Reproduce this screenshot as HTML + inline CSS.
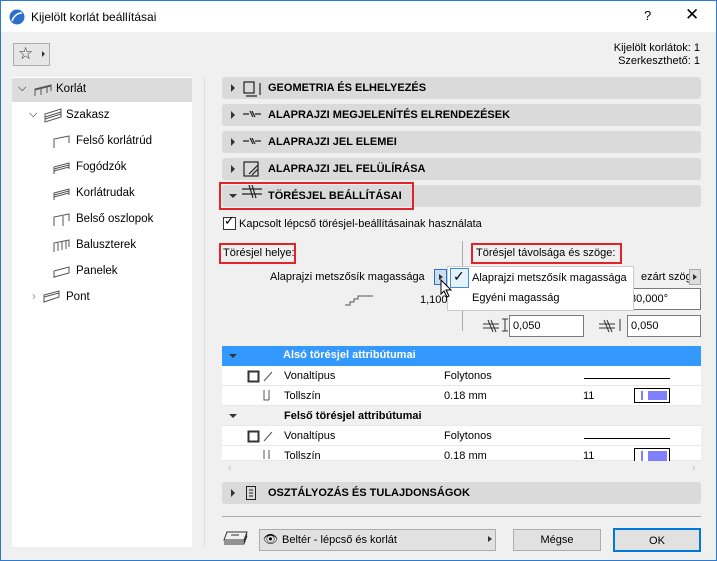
<!DOCTYPE html>
<html><head><meta charset="utf-8"><style>
*{box-sizing:border-box;margin:0;padding:0}
body{width:717px;height:561px;overflow:hidden;font-family:"Liberation Sans",sans-serif;font-size:11px;color:#000;background:#f0f0f0;position:relative}
.win{position:absolute;left:0;top:0;width:717px;height:561px;border:1px solid #2b7bd0;background:#f0f0f0}
.abs{position:absolute}
.title{left:0;top:0;width:715px;height:31px;background:#fff}
.hdr{position:absolute;left:221px;width:479px;height:22px;background:#dadada;border-radius:3px;font-weight:bold;font-size:11px}
.hdr .tx{position:absolute;left:46px;top:5px}
.hdr .ar{position:absolute;left:9px;top:7px;width:0;height:0;border-left:4px solid #333;border-top:4px solid transparent;border-bottom:4px solid transparent}
.tree div{position:absolute;font-size:11.5px}
.inp{position:absolute;background:#fff;border:1px solid #7a7a7a;height:22px;padding:4px 3px;font-size:11px}
.row{position:absolute;left:221px;width:479px;height:20px;background:#fff;border-bottom:1px solid #e8e8e8}
.row span{position:absolute;top:4px}
.btn{position:absolute;height:22px;background:#e1e1e1;border:1px solid #adadad;text-align:center;padding-top:4px}
</style></head><body><div class="win">
<div class="abs title"></div>
<svg class="abs" style="left:8px;top:8px" width="16" height="16"><circle cx="8" cy="8" r="7.5" fill="#2a6fc9"/><path d="M3 12 Q6 4 13 4" stroke="#fff" stroke-width="1.6" fill="none"/></svg>
<div class="abs" style="left:30px;top:9px;font-size:12px">Kijelölt korlát beállításai</div>
<div class="abs" style="left:643px;top:7px;font-size:13px">?</div>
<div class="abs" style="left:684px;top:4px;font-size:17px">✕</div>

<div class="abs" style="left:12px;top:42px;width:37px;height:23px;border:1px solid #adadad;background:#e6e6e6"></div>
<div class="abs" style="left:17px;top:43px;font-size:17px;color:#333">☆</div>
<div class="abs" style="left:41px;top:50px;border-left:3px solid #333;border-top:3px solid transparent;border-bottom:3px solid transparent"></div>
<div class="abs" style="right:16px;top:41px;text-align:right;line-height:13px">Kijelölt korlátok: 1<br>Szerkeszthető: 1</div>

<div class="abs" style="left:11px;top:76px;width:180px;height:470px;background:#fff"></div>
<div class="abs" style="left:11px;top:77px;width:180px;height:24px;background:#dcdcdc"></div>
<div class="abs" style="left:203px;top:76px;width:1px;height:470px;background:#ddd"></div>
<div class="tree">
<div style="left:17px;top:81px;font-size:11px">⌵</div><div style="left:55px;top:82px">Korlát</div>
<div style="left:28px;top:107px;font-size:11px">⌵</div><div style="left:65px;top:108px">Szakasz</div>
<div style="left:75px;top:134px">Felső korlátrúd</div>
<div style="left:75px;top:160px">Fogódzók</div>
<div style="left:75px;top:186px">Korlátrudak</div>
<div style="left:75px;top:212px">Belső oszlopok</div>
<div style="left:75px;top:238px">Baluszterek</div>
<div style="left:75px;top:264px">Panelek</div>
<div style="left:31px;top:290px;color:#999">›</div><div style="left:65px;top:290px">Pont</div>
</div>
<svg class="abs" style="left:30px;top:80px" width="160" height="225" fill="none" stroke="#555" stroke-width="1">
<path d="M4 15 L4 8 L20 4 L20 10 M4 9 L20 5 M10 14 L10 7 M16 12 L16 6"/>
<path d="M14 41 L14 33 L30 28 L30 36 Z M14 36 L30 31 M14 38 L30 33"/>
<path d="M23 67 L23 58 L38 55 L38 62"/>
<path d="M23 93 L23 86 L38 82 L38 88 M23 88 L38 84 M23 90 L38 86"/>
<path d="M23 119 L23 112 L38 108 L38 114 M23 114 L38 110 M23 116 L38 112"/>
<path d="M23 145 L23 136 L38 133 L38 140 M32 145 L32 135"/>
<path d="M23 171 L23 162 L38 159 L38 166 M27 170 L27 162 M31 169 L31 161 M35 168 L35 160"/>
<path d="M23 197 L23 190 L38 186 L38 192 L23 196"/>
<path d="M13 221 L13 214 L28 210 L28 216 Z M13 216 L28 212"/>
</svg>

<div class="hdr" style="top:76px"><div class="ar"></div><div class="tx">GEOMETRIA ÉS ELHELYEZÉS</div></div>
<div class="hdr" style="top:103px"><div class="ar"></div><div class="tx">ALAPRAJZI MEGJELENÍTÉS ELRENDEZÉSEK</div></div>
<div class="hdr" style="top:130px"><div class="ar"></div><div class="tx">ALAPRAJZI JEL ELEMEI</div></div>
<div class="hdr" style="top:157px"><div class="ar"></div><div class="tx">ALAPRAJZI JEL FELÜLÍRÁSA</div></div>
<div class="hdr" style="top:184px"><div class="ar" style="left:7px;top:9px;border-left:4px solid transparent;border-right:4px solid transparent;border-top:4px solid #333;border-bottom:0"></div><div class="tx">TÖRÉSJEL BEÁLLÍTÁSAI</div></div>
<div class="abs" style="left:218px;top:181px;width:195px;height:28px;border:2px solid #e0242a"></div>
<svg class="abs" style="left:240px;top:79px" width="25" height="125" fill="none" stroke="#222" stroke-width="1.2">
<rect x="3" y="2" width="10" height="11"/><path d="M5 16 L16 16 M19 3 L19 15"/>
<path d="M2 34 L8 34 M14 34 L20 34 M9 31 L12 37 M11 31 L14 37"/>
<path d="M2 61 L8 61 M14 61 L20 61 M9 58 L12 64 M11 58 L14 64"/>
<rect x="3" y="82" width="14" height="14"/><path d="M8 94 L17 85 M11 95 L17 89"/>
<path d="M1 109 L21 109 M1 114 L21 114 M8 105 L12 118 M11 105 L15 118"/>
</svg>

<div class="abs" style="left:222px;top:216px;width:13px;height:13px;border:1px solid #333;background:#fff"></div>
<div class="abs" style="left:223px;top:212px;font-size:13px">✓</div>
<div class="abs" style="left:238px;top:217px">Kapcsolt lépcső törésjel-beállításainak használata</div>

<div class="abs" style="left:218px;top:242px;width:77px;height:21px;border:2px solid #e0242a"></div>
<div class="abs" style="left:222px;top:246px">Törésjel helye:</div>
<div class="abs" style="left:461px;top:240px;width:1px;height:90px;background:#aaa"></div>
<div class="abs" style="left:470px;top:242px;width:151px;height:21px;border:2px solid #e0242a"></div>
<div class="abs" style="left:475px;top:246px">Törésjel távolsága és szöge:</div>

<div class="abs" style="left:269px;top:270px">Alaprajzi metszősík magassága</div>
<div class="abs" style="left:433px;top:268px;width:13px;height:16px;border:1px solid #2a6fc9;background:#cde"></div>
<div class="abs" style="left:438px;top:273px;border-left:4px solid #333;border-top:3px solid transparent;border-bottom:3px solid transparent"></div>
<svg class="abs" style="left:343px;top:290px" width="30" height="16" fill="none" stroke="#555"><path d="M1 14 L6 14 L6 11 L10 11 L10 8 L14 8 L14 5 L18 5 M18 5 L29 5"/></svg>
<div class="abs" style="left:419px;top:293px">1,100</div>
<div class="abs" style="left:640px;top:270px">ezárt szög</div>
<div class="abs" style="left:688px;top:268px;width:12px;height:16px;border:1px solid #aaa;background:#ddd"></div>
<div class="abs" style="left:692px;top:273px;border-left:4px solid #333;border-top:3px solid transparent;border-bottom:3px solid transparent"></div>
<div class="inp" style="left:625px;top:287px;width:75px">30,000°</div>
<div class="inp" style="left:508px;top:314px;width:75px">0,050</div>
<div class="inp" style="left:626px;top:314px;width:74px">0,050</div>
<svg class="abs" style="left:480px;top:316px" width="140" height="18" fill="none" stroke="#333"><path d="M2 7 L18 7 M2 11 L18 11 M7 3 L12 15 M10 3 L15 15 M24 2 L24 14 M21 2 L27 2 M21 14 L27 14"/><path d="M118 7 L134 7 M118 11 L134 11 M123 3 L128 15 M126 3 L131 15 M139 2 L139 14"/></svg>

<div class="abs" style="left:446px;top:265px;width:187px;height:45px;background:#fff;border:1px solid #ccc"></div>
<div class="abs" style="left:449px;top:267px;width:19px;height:20px;border:1px solid #3a8ee6;background:#e5f1fb"></div>
<div class="abs" style="left:452px;top:267px;font-size:14px">✓</div>
<div class="abs" style="left:471px;top:271px">Alaprajzi metszősík magassága</div>
<div class="abs" style="left:471px;top:291px">Egyéni magasság</div>
<svg class="abs" style="left:439px;top:278px" width="14" height="20"><path d="M1 1 L1 15 L4 12 L7 18 L9 17 L6 11 L11 11 Z" fill="#fff" stroke="#000"/></svg>

<div class="abs" style="left:221px;top:345px;width:479px;height:20px;background:#3399ff"></div>
<div class="abs" style="left:228px;top:353px;border-top:4px solid #333;border-left:4px solid transparent;border-right:4px solid transparent"></div>
<div class="abs" style="left:282px;top:348px;color:#fff;font-weight:bold">Alsó törésjel attribútumai</div>
<div class="row" style="top:365px"><span style="left:62px">Vonaltípus</span><span style="left:222px">Folytonos</span></div>
<div class="row" style="top:385px"><span style="left:62px">Tollszín</span><span style="left:222px">0.18 mm</span><span style="left:361px">11</span></div>
<div class="row" style="top:405px;background:#f0f0f0"><span style="left:62px;font-weight:bold">Felső törésjel attribútumai</span></div>
<div class="abs" style="left:228px;top:413px;border-top:4px solid #333;border-left:4px solid transparent;border-right:4px solid transparent"></div>
<div class="row" style="top:425px"><span style="left:62px">Vonaltípus</span><span style="left:222px">Folytonos</span></div>
<div class="row" style="top:445px;height:15px;overflow:hidden"><span style="left:62px">Tollszín</span><span style="left:222px">0.18 mm</span><span style="left:361px">11</span></div>
<div class="abs" style="left:583px;top:377px;width:86px;height:1px;background:#000"></div>
<div class="abs" style="left:583px;top:437px;width:86px;height:1px;background:#000"></div>
<div class="abs" style="left:633px;top:387px;width:36px;height:15px;border:1px solid #000;background:#fff"></div>
<div class="abs" style="left:640px;top:390px;width:2px;height:9px;background:#8080ff"></div>
<div class="abs" style="left:647px;top:390px;width:19px;height:9px;background:#8080ff"></div>
<div class="abs" style="left:633px;top:447px;width:36px;height:13px;border:1px solid #000;border-bottom:0;background:#fff"></div>
<div class="abs" style="left:640px;top:450px;width:2px;height:10px;background:#8080ff"></div>
<div class="abs" style="left:647px;top:450px;width:19px;height:10px;background:#8080ff"></div>
<svg class="abs" style="left:246px;top:368px" width="30" height="90" fill="none" stroke="#333"><rect x="1.5" y="2.5" width="10" height="10" stroke-width="2"/><path d="M17 12 L25 3" stroke="#555"/><path d="M17 21 L17 31 L22 31 M22 21 L22 31" stroke="#555"/><rect x="1.5" y="62.5" width="10" height="10" stroke-width="2"/><path d="M17 72 L25 63" stroke="#555"/><path d="M17 81 L17 90 M22 81 L22 90" stroke="#555"/></svg>
<div class="abs" style="left:227px;top:461px;color:#bbb">‹</div><div class="abs" style="left:691px;top:461px;color:#bbb">›</div>

<div class="hdr" style="top:481px"><div class="ar"></div><div class="tx">OSZTÁLYOZÁS ÉS TULAJDONSÁGOK</div></div>
<svg class="abs" style="left:244px;top:484px" width="12" height="16" fill="none" stroke="#222"><rect x="1.5" y="1.5" width="9" height="13"/><path d="M4 5 L8 5 M4 8 L8 8 M4 11 L8 11"/></svg>
<div class="abs" style="left:221px;top:515px;width:479px;height:1px;background:#aaa"></div>
<svg class="abs" style="left:222px;top:529px" width="26" height="18" fill="none" stroke="#333"><path d="M4 2 L24 2 L21 10 L1 10 Z M1 12 L21 12 L24 4 M1 14 L21 14 L24 6 M8 5 L16 5"/></svg>
<div class="btn" style="left:258px;top:528px;width:237px;text-align:left;padding-left:22px">Beltér - lépcső és korlát</div>
<div class="abs" style="left:262px;top:531px;font-size:12px">👁</div>
<div class="abs" style="left:487px;top:535px;border-left:4px solid #333;border-top:3px solid transparent;border-bottom:3px solid transparent"></div>
<div class="btn" style="left:512px;top:528px;width:88px">Mégse</div>
<div class="btn" style="left:612px;top:527px;width:88px;height:24px;border:2px solid #0078d7;padding-top:5px">OK</div>
</div></body></html>
